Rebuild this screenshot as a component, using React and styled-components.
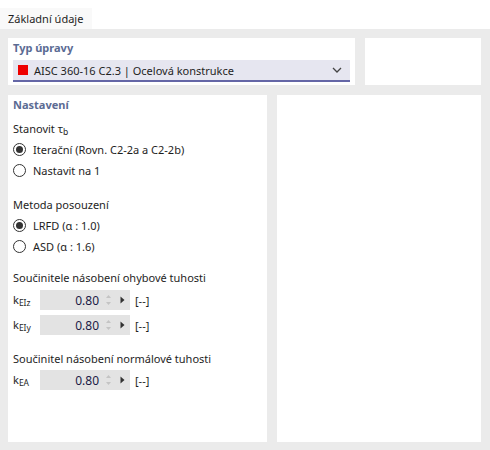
import React from "react";
import styled, { createGlobalStyle } from "styled-components";

const Global = createGlobalStyle`
  html, body { margin: 0; padding: 0; background: #ebebeb; }
  body { font-family: "Noto Sans", "Open Sans", sans-serif; font-size: 11px; color: #1e1e1e; }
  #root { width: 490px; height: 450px; overflow: hidden; }
`;

const Page = styled.div`
  width: 490px;
  height: 450px;
  display: flex;
  flex-direction: column;
  background: #ebebeb;
`;

const TabStrip = styled.div`
  height: 29px;
  background: #ffffff;
  display: flex;
  align-items: flex-end;
`;

const Tab = styled.div`
  width: 92px;
  height: 21px;
  box-sizing: border-box;
  padding-left: 8px;
  display: flex;
  align-items: center;
  background: #f9f9f9;
  color: #1e1e1e;
`;

const Body = styled.div`
  flex: 1;
  padding: 9px 9px 8px 8px;
  display: grid;
  grid-template-columns: 259px 1fr;
  grid-template-rows: 47px 1fr;
  column-gap: 10px;
  row-gap: 10px;
`;

const TopRow = styled.div`
  grid-column: 1 / span 2;
  display: flex;
  gap: 10px;
`;

const Panel = styled.div`
  background: #fff;
  box-sizing: border-box;
  flex: ${(p) => (p.$grow ? 1 : "none")};
  width: ${(p) => (p.$w ? `${p.$w}px` : "auto")};
  padding: ${(p) => p.$pad || "0"};
`;

const Heading = styled.div`
  font-weight: 700;
  color: #5b6b93;
  height: 20px;
  line-height: 20px;
`;

const Select = styled.div`
  margin-top: 2px;
  height: 22px;
  box-sizing: border-box;
  background: #e6e6f0;
  border-bottom: 2px solid #6466a6;
  display: flex;
  align-items: center;
  padding: 0 8px 0 5px;
  gap: 6px;
`;

const Swatch = styled.span`
  width: 10px;
  height: 10px;
  background: #ee0000;
  flex: none;
`;

const SelectText = styled.span`
  flex: 1;
  white-space: nowrap;
`;

const Chevron = () => (
  <svg width="10" height="6" viewBox="0 0 10 6">
    <path d="M1 1 L5 5 L9 1" fill="none" stroke="#444" strokeWidth="1.3" />
  </svg>
);

const Label = styled.div`
  height: 20px;
  line-height: 20px;
  margin-top: ${(p) => p.$mt || 0}px;
  white-space: nowrap;
`;

const Sub = styled.sub`
  font-size: 8.5px;
  vertical-align: -2px;
`;

const RadioRow = styled.div`
  height: 21px;
  display: flex;
  align-items: center;
  gap: 7px;
`;

const RadioDot = styled.span`
  width: 13px;
  height: 13px;
  box-sizing: border-box;
  border: 1px solid #333;
  border-radius: 50%;
  display: flex;
  align-items: center;
  justify-content: center;
  flex: none;
  &::after {
    content: "";
    width: 7px;
    height: 7px;
    border-radius: 50%;
    background: ${(p) => (p.$on ? "#333" : "transparent")};
  }
`;

const FieldRow = styled.div`
  height: 20px;
  margin-top: ${(p) => p.$mt || 0}px;
  display: flex;
  align-items: center;
`;

const Sym = styled.span`
  width: 27px;
  white-space: nowrap;
`;

const Input = styled.div`
  width: 90px;
  height: 20px;
  background: #e3e3e3;
  display: flex;
  align-items: center;
  justify-content: flex-end;
  padding-right: 5px;
  box-sizing: border-box;
`;

const Value = styled.span`
  color: #1a1a46;
  font-size: 12px;
  margin-right: 6px;
`;

const Spin = () => (
  <svg width="7" height="14" viewBox="0 0 7 14" style={{ marginRight: 8 }}>
    <path d="M1 5 L3.5 2 L6 5 Z" fill="#c4c4c4" />
    <path d="M1 9 L3.5 12 L6 9 Z" fill="#c4c4c4" />
  </svg>
);

const Play = () => (
  <svg width="5" height="8" viewBox="0 0 5 8">
    <path d="M0.5 0.5 L4.5 4 L0.5 7.5 Z" fill="#333" />
  </svg>
);

const Unit = styled.span`
  margin-left: 5px;
`;

const Field = ({ sub, mt }) => (
  <FieldRow $mt={mt}>
    <Sym>
      k<Sub>{sub}</Sub>
    </Sym>
    <Input>
      <Value>0.80</Value>
      <Spin />
      <Play />
    </Input>
    <Unit>[--]</Unit>
  </FieldRow>
);

const Radio = ({ on, children }) => (
  <RadioRow>
    <RadioDot $on={on} />
    <span>{children}</span>
  </RadioRow>
);

export default function App() {
  return (
    <Page>
      <Global />
      <TabStrip>
        <Tab>Základní údaje</Tab>
      </TabStrip>
      <Body>
        <TopRow>
          <Panel $w={347} $pad="0 5px">
            <Heading>Typ úpravy</Heading>
            <Select>
              <Swatch />
              <SelectText>AISC 360-16 C2.3 | Ocelová konstrukce</SelectText>
              <Chevron />
            </Select>
          </Panel>
          <Panel $grow />
        </TopRow>
        <Panel $pad="0 5px">
          <Heading>Nastavení</Heading>
          <Label $mt={4}>
            Stanovit τ<Sub>b</Sub>
          </Label>
          <Radio on>Iterační (Rovn. C2-2a a C2-2b)</Radio>
          <Radio>Nastavit na 1</Radio>
          <Label $mt={14}>Metoda posouzení</Label>
          <Radio on>LRFD (α : 1.0)</Radio>
          <Radio>ASD (α : 1.6)</Radio>
          <Label $mt={11}>Součinitele násobení ohybové tuhosti</Label>
          <Field sub="EIz" mt={2} />
          <Field sub="EIy" mt={5} />
          <Label $mt={14}>Součinitel násobení normálové tuhosti</Label>
          <Field sub="EA" mt={1} />
        </Panel>
        <Panel />
      </Body>
    </Page>
  );
}
